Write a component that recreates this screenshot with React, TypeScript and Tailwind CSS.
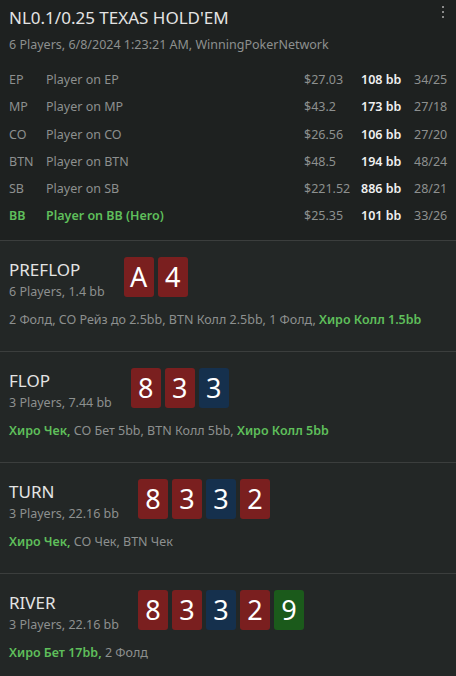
const players = [
  { pos: "EP", name: "Player on EP", money: "$27.03", bb: "108 bb", ratio: "34/25" },
  { pos: "MP", name: "Player on MP", money: "$43.2", bb: "173 bb", ratio: "27/18" },
  { pos: "CO", name: "Player on CO", money: "$26.56", bb: "106 bb", ratio: "27/20" },
  { pos: "BTN", name: "Player on BTN", money: "$48.5", bb: "194 bb", ratio: "48/24" },
  { pos: "SB", name: "Player on SB", money: "$221.52", bb: "886 bb", ratio: "28/21" },
  { pos: "BB", name: "Player on BB (Hero)", money: "$25.35", bb: "101 bb", ratio: "33/26", hero: true },
];

type Suit = "h" | "d" | "c";
const suitBg: Record<Suit, string> = {
  h: "bg-[#7a1f1f]",
  d: "bg-[#15304d]",
  c: "bg-[#1b5a1b]",
};

type Part = { text: string; hero?: boolean };

const streets: { name: string; info: string; cards: [string, Suit][]; actions: Part[] }[] = [
  {
    name: "PREFLOP",
    info: "6 Players, 1.4 bb",
    cards: [["A", "h"], ["4", "h"]],
    actions: [
      { text: "2 Фолд, CO Рейз до 2.5bb, BTN Колл 2.5bb, 1 Фолд, " },
      { text: "Хиро Колл 1.5bb", hero: true },
    ],
  },
  {
    name: "FLOP",
    info: "3 Players, 7.44 bb",
    cards: [["8", "h"], ["3", "h"], ["3", "d"]],
    actions: [
      { text: "Хиро Чек,", hero: true },
      { text: " CO Бет 5bb, BTN Колл 5bb, " },
      { text: "Хиро Колл 5bb", hero: true },
    ],
  },
  {
    name: "TURN",
    info: "3 Players, 22.16 bb",
    cards: [["8", "h"], ["3", "h"], ["3", "d"], ["2", "h"]],
    actions: [
      { text: "Хиро Чек,", hero: true },
      { text: " CO Чек, BTN Чек" },
    ],
  },
  {
    name: "RIVER",
    info: "3 Players, 22.16 bb",
    cards: [["8", "h"], ["3", "h"], ["3", "d"], ["2", "h"], ["9", "c"]],
    actions: [
      { text: "Хиро Бет 17bb,", hero: true },
      { text: " 2 Фолд" },
    ],
  },
];

export default function App() {
  return (
    <div
      className="w-[456px] h-[676px] overflow-hidden bg-[#232726] text-[#8d908f]"
      style={{ fontFamily: '"Noto Sans", "Open Sans", sans-serif' }}
    >
      {/* Header */}
      <div className="relative bg-[#1e2120] pl-[9px] pr-[7px] pt-[5px] pb-[10px] border-b border-[#3b3e3d]">
        <div className="text-[17px] leading-[26px] text-[#e4e4e4]">NL0.1/0.25 TEXAS HOLD'EM</div>
        <div className="text-[12.5px] leading-[28px]">6 Players, 6/8/2024 1:23:21 AM, WinningPokerNetwork</div>
        <div className="absolute right-[12px] top-[6px] flex flex-col gap-[3px]">
          <span className="w-[2px] h-[2px] bg-[#8a8a8a]" />
          <span className="w-[2px] h-[2px] bg-[#8a8a8a]" />
          <span className="w-[2px] h-[2px] bg-[#8a8a8a]" />
        </div>
        <div className="mt-[8px] grid grid-cols-[37px_1fr_57px_53px_35px] text-[12.5px]">
          {players.map((p) => (
            <div key={p.pos} className="contents">
              <div className={`h-[27.2px] flex items-center ${p.hero ? "text-[#5fbf5b] font-semibold" : ""}`}>{p.pos}</div>
              <div className={`h-[27.2px] flex items-center ${p.hero ? "text-[#5fbf5b] font-semibold" : ""}`}>{p.name}</div>
              <div className="h-[27.2px] flex items-center">{p.money}</div>
              <div className="h-[27.2px] flex items-center font-semibold text-[#f0f0f0]">{p.bb}</div>
              <div className="h-[27.2px] flex items-center">{p.ratio}</div>
            </div>
          ))}
        </div>
      </div>

      {/* Streets */}
      {streets.map((s) => (
        <div key={s.name} className="pl-[9px] pr-[7px] pt-[16px] pb-[21px] border-b border-[#3b3e3d]">
          <div className="flex items-start gap-[19px]">
            <div className="pt-[1px]">
              <div className="text-[17px] leading-[24px] text-[#e4e4e4]">{s.name}</div>
              <div className="text-[12.5px] leading-[20px]">{s.info}</div>
            </div>
            <div className="flex gap-[4px]">
              {s.cards.map(([rank, suit], i) => (
                <div
                  key={i}
                  className={`w-[30px] h-[40px] rounded-[3px] flex items-center justify-center text-[27px] text-white ${suitBg[suit]}`}
                >
                  {rank}
                </div>
              ))}
            </div>
          </div>
          <div className="mt-[8px] text-[12.5px] leading-[20px]">
            {s.actions.map((a, i) => (
              <span key={i} className={a.hero ? "text-[#5fbf5b] font-semibold" : ""}>
                {a.text}
              </span>
            ))}
          </div>
        </div>
      ))}
    </div>
  );
}
